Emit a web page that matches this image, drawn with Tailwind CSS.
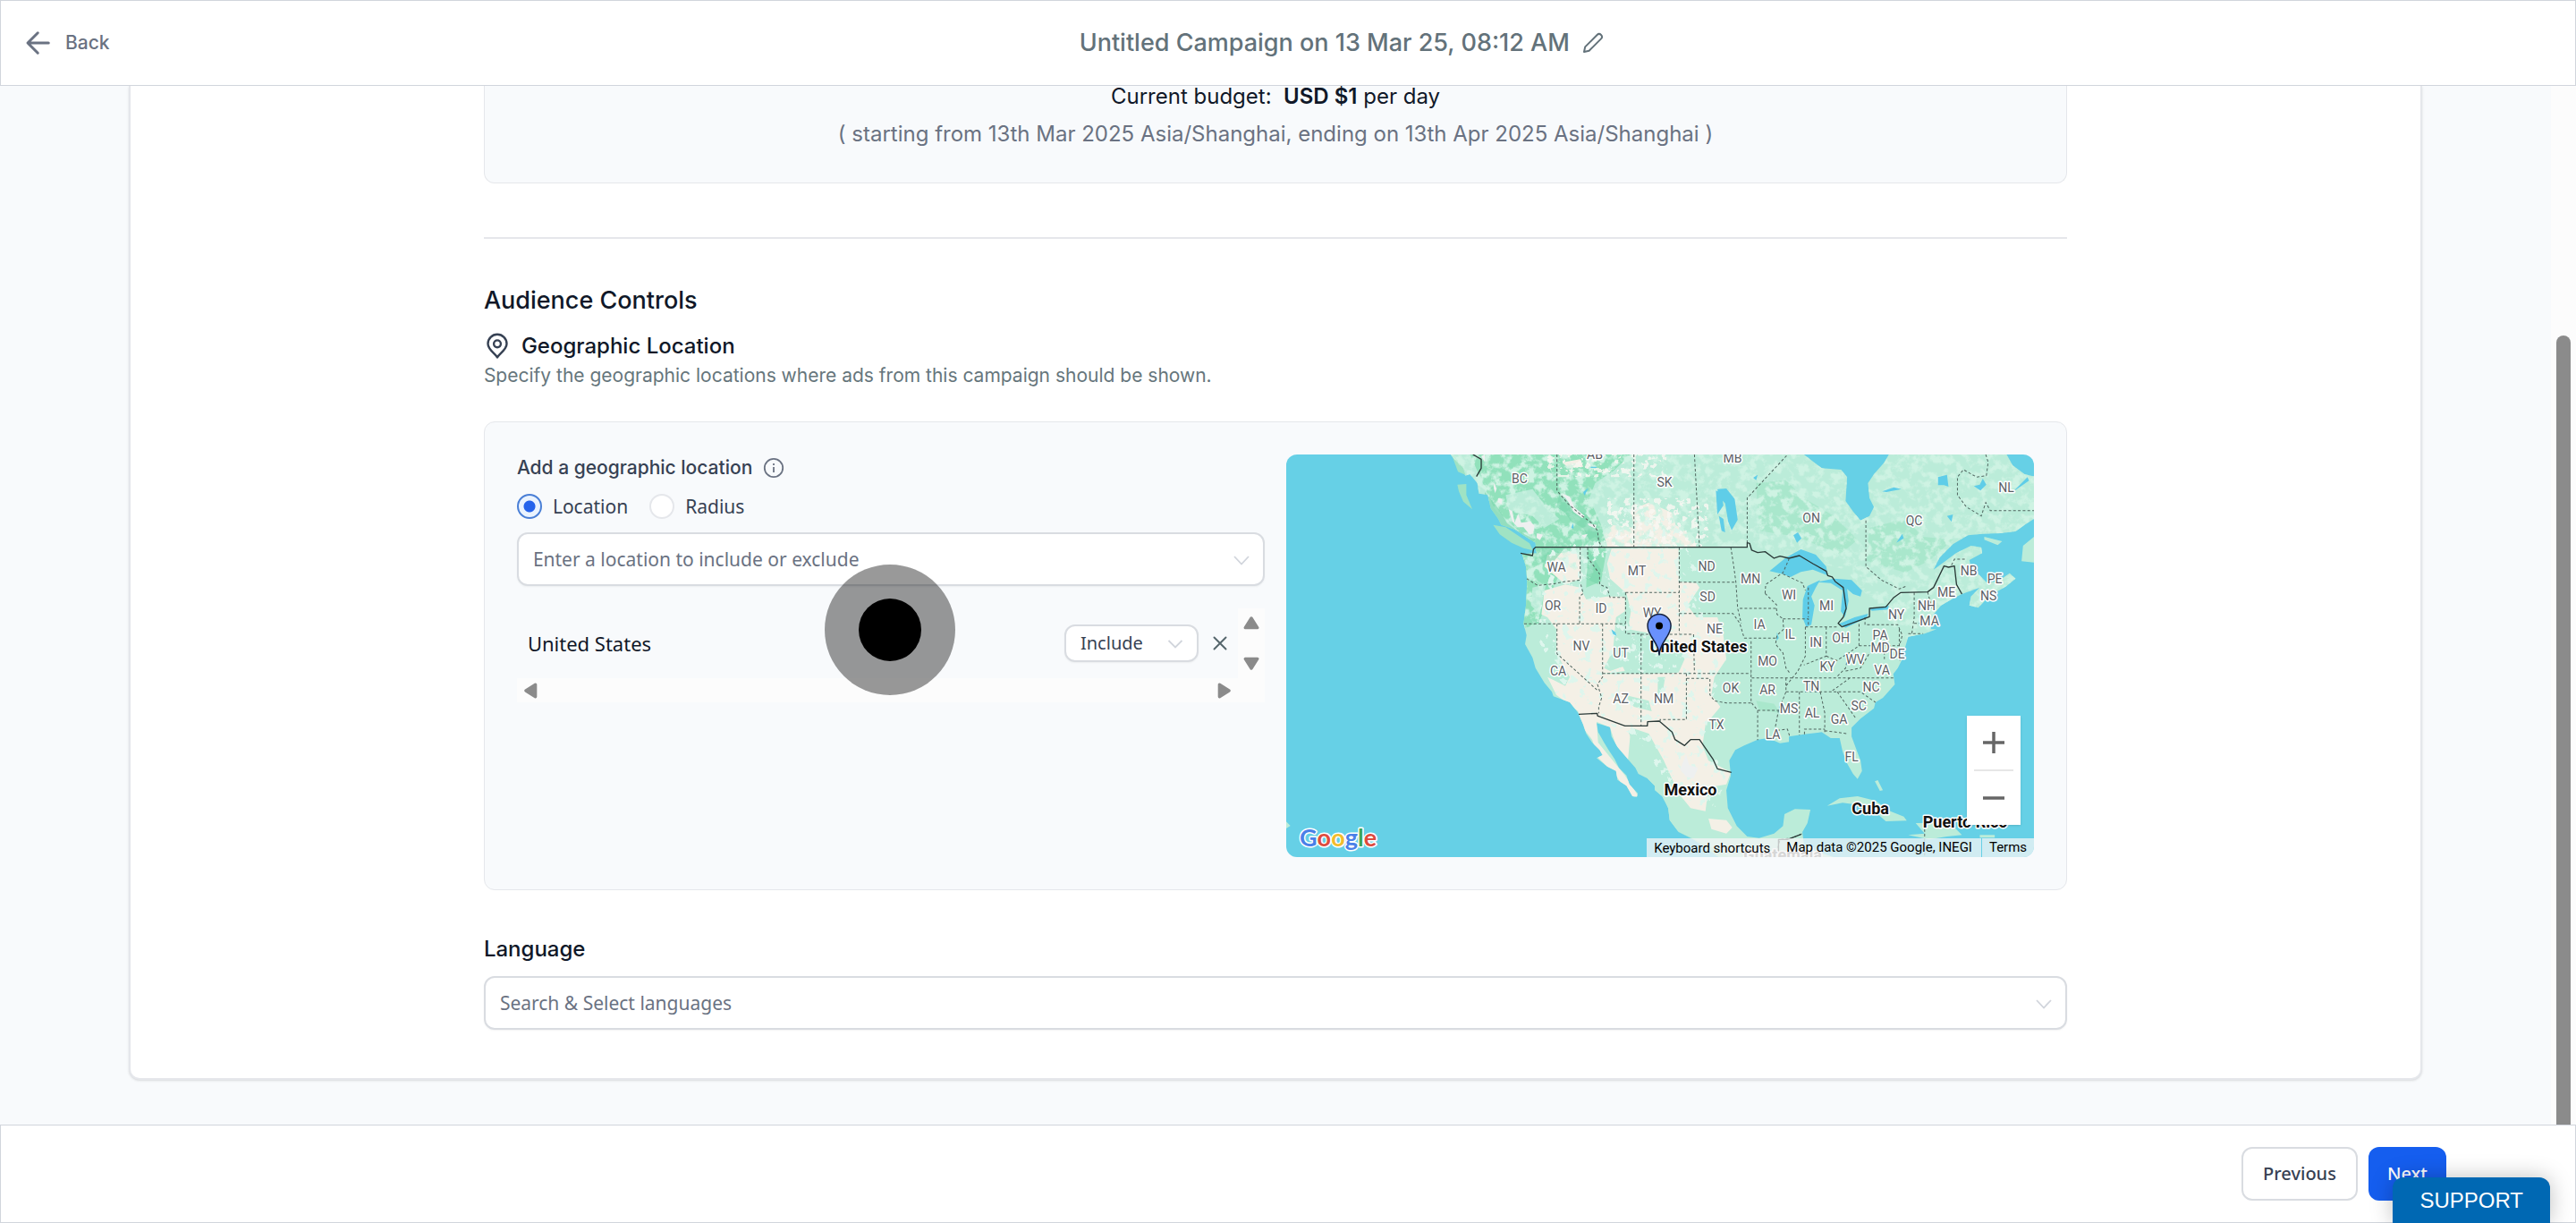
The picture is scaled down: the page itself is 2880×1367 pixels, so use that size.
<!DOCTYPE html>
<html lang="en">
<head>
    <meta charset="UTF-8">
    <meta name="viewport" content="width=device-width, initial-scale=1.0">
    <title>Untitled Campaign</title>
    <script src="https://cdn.jsdelivr.net/npm/@tailwindcss/browser@4"></script>
</head>
<body class="flex h-screen flex-col overflow-hidden bg-[#f8fafc] font-['Inter',sans-serif] text-gray-900">

    <!-- Top bar -->
    <header class="flex h-24 shrink-0 items-center border border-gray-300 bg-white pl-6">
        <button type="button" class="flex items-center gap-3 text-[21px] font-medium text-gray-500">
            <svg class="size-9" viewBox="0 0 24 24" fill="none" stroke="currentColor" stroke-width="2" stroke-linecap="round" stroke-linejoin="round"><path d="M19.500 12H4.500M11.500 4.500L4 12l7.500 7.500"/></svg>
            Back
        </button>
        <div class="flex flex-1 items-center justify-center gap-3">
            <h1 class="text-[27px] font-medium text-[#63727a]">Untitled Campaign on 13 Mar 25, 08:12 AM</h1>
            <button type="button" aria-label="Rename campaign" class="text-[#63727a]">
                <svg class="size-7" viewBox="0 0 28 28" fill="none" stroke="currentColor" stroke-width="2" stroke-linejoin="round"><path d="M4 24l1.200-5.600L18.600 5a3.100 3.100 0 0 1 4.400 4.400L9.600 22.800z"/></svg>
            </button>
        </div>
    </header>

    <div class="flex min-h-0 flex-1">
        <main class="flex-1 overflow-hidden px-36">
            <div class="rounded-b-xl border-x-2 border-b-2 border-gray-200 bg-white pb-[54px] shadow-sm">
                <div class="mx-auto w-[69.15%]">

                    <!-- Budget summary -->
                    <section class="rounded-b-xl border-x border-b border-gray-200 bg-[#f8fafc] pb-10 text-center text-2xl">
                        <p class="leading-6">Current budget:&nbsp; <strong class="font-semibold">USD $1</strong> per day</p>
                        <p class="mt-4 leading-7 text-gray-500">( starting from 13th Mar 2025 Asia/Shanghai, ending on 13th Apr 2025 Asia/Shanghai )</p>
                    </section>

                    <hr class="mt-15 border-t-2 border-gray-200">

                    <!-- Audience -->
                    <h2 class="mt-[51px] text-[27px] leading-9 font-medium">Audience Controls</h2>
                    <div class="mt-[15px] flex items-center gap-3">
                        <svg class="size-[30px] text-gray-700" viewBox="0 0 30 30" fill="none" stroke="currentColor" stroke-width="2.400" stroke-linejoin="round"><path d="M15 27.500C13 23.500 4.500 19 4.500 12.300a10.500 10.500 0 0 1 21 0C25.500 19 17 23.500 15 27.500z"/><circle cx="15" cy="12.300" r="3.900"/></svg>
                        <h3 class="text-2xl leading-9 font-medium">Geographic Location</h3>
                    </div>
                    <p class="text-[21px] leading-[30px] text-[#66767c]">Specify the geographic locations where ads from this campaign should be shown.</p>

                    <section class="mt-9 grid grid-cols-2 gap-6 rounded-xl border border-gray-200 bg-[#f8fafc] p-9">
                        <div>
                            <div class="flex items-center gap-3 text-[21px] leading-[30px] font-medium text-gray-700">
                                <label for="location">Add a geographic location</label>
                                <svg class="size-6 text-gray-500" viewBox="0 0 24 24" fill="none" stroke="currentColor" stroke-width="1.800"><circle cx="12" cy="12" r="10.200"/><path d="M12 11v6M12 7v2"/></svg>
                            </div>
                            <div class="mt-3 flex items-center gap-6 font-['Noto_Sans',sans-serif] text-[21px] leading-8 text-gray-700">
                                <label class="flex items-center gap-3">
                                    <input type="radio" name="mode" checked class="size-7 appearance-none rounded-full border-2 border-[#4a7fd6] bg-[radial-gradient(circle,#2563eb_6px,#eaf3ff_7px)]">
                                    Location
                                </label>
                                <label class="flex items-center gap-3">
                                    <input type="radio" name="mode" class="size-7 appearance-none rounded-full border-2 border-gray-200 bg-white">
                                    Radius
                                </label>
                            </div>
                            <div class="relative mt-[13px] font-['Noto_Sans',sans-serif]">
                                <input id="location" type="text" placeholder="Enter a location to include or exclude" class="block h-15 w-full rounded-xl border-2 border-[#d9dce1] bg-white px-4 text-[21px] shadow-xs placeholder:text-gray-500">
                                <svg class="absolute top-[22px] right-4 size-5 text-gray-300" viewBox="0 0 20 20" fill="none" stroke="currentColor" stroke-width="1.800"><path d="M2 5l8 8.500L18 5"/></svg>

                                <!-- Click marker -->
                                <span class="absolute top-9 left-1/2 -ml-[74px] flex size-[146px] items-center justify-center rounded-full bg-black/40">
                                    <span class="size-[70px] rounded-full bg-black"></span>
                                </span>
                            </div>

                            <!-- Chosen locations, with its scrollbars -->
                            <div class="mt-[25px] grid grid-cols-[1fr_30px] font-['Noto_Sans',sans-serif]">
                                <div class="flex h-[78px] items-center gap-4 pr-3 pl-3">
                                    <span class="flex-1 text-[22px]">United States</span>
                                    <span class="relative">
                                        <select aria-label="Include or exclude" class="block h-[42px] w-[150px] appearance-none rounded-xl border-2 border-[#d9dce1] bg-white pl-4 text-[20px] text-gray-700 shadow-xs">
                                            <option>Include</option>
                                            <option>Exclude</option>
                                        </select>
                                        <svg class="pointer-events-none absolute top-3 right-4 size-5 text-gray-300" viewBox="0 0 20 20" fill="none" stroke="currentColor" stroke-width="1.800"><path d="M2.500 6l7.500 7.500L17.500 6"/></svg>
                                    </span>
                                    <button type="button" aria-label="Remove United States" class="text-[#56666c]">
                                        <svg class="size-4" viewBox="0 0 16 16" fill="none" stroke="currentColor" stroke-width="2" stroke-linecap="round"><path d="M1.500 1.500l13 13M14.500 1.500l-13 13"/></svg>
                                    </button>
                                </div>
                                <div class="flex flex-col items-center justify-between bg-[#fcfcfc] py-[7px] text-[#8b8b8b]">
                                    <svg class="size-[18px]" viewBox="0 0 16 16" fill="currentColor" stroke="currentColor" stroke-width="3" stroke-linejoin="round"><path d="M8 3.500L14 13H2z"/></svg>
                                    <svg class="size-[18px]" viewBox="0 0 16 16" fill="currentColor" stroke="currentColor" stroke-width="3" stroke-linejoin="round"><path d="M8 12.500L14 3H2z"/></svg>
                                </div>
                                <div class="flex h-[27px] items-center justify-between bg-[#fcfcfc] px-1.5 text-[#8b8b8b]">
                                    <svg class="size-[18px]" viewBox="0 0 16 16" fill="currentColor" stroke="currentColor" stroke-width="3" stroke-linejoin="round"><path d="M3.500 8L13 2v12z"/></svg>
                                    <svg class="size-[18px]" viewBox="0 0 16 16" fill="currentColor" stroke="currentColor" stroke-width="3" stroke-linejoin="round"><path d="M12.500 8L3 2v12z"/></svg>
                                </div>
                                <div class="bg-[#fcfcfc]"></div>
                            </div>
                        </div>

                        <!-- Map -->
                        <div class="relative h-[450px] overflow-hidden rounded-xl bg-[#66d0e6] font-['Roboto',sans-serif]">
                            <svg class="block size-full" viewBox="0 0 836 450" preserveAspectRatio="xMidYMid slice" role="img" aria-label="Map of the United States">
                                <defs>
                                    <filter id="forest" x="0" y="0" width="100%" height="100%">
                                        <feTurbulence type="fractalNoise" baseFrequency="0.035" numOctaves="4" seed="7"/>
                                        <feColorMatrix values="0 0 0 0 .62  0 0 0 0 .894  0 0 0 0 .77  5 0 0 0 -2.300"/>
                                    </filter>
                                    <filter id="scrub" x="0" y="0" width="100%" height="100%">
                                        <feTurbulence type="fractalNoise" baseFrequency="0.04" numOctaves="4" seed="3"/>
                                        <feColorMatrix values="0 0 0 0 .73  0 0 0 0 .925  0 0 0 0 .85  14 0 0 0 -8.400"/>
                                    </filter>
                                    <filter id="plain" x="0" y="0" width="100%" height="100%">
                                        <feTurbulence type="fractalNoise" baseFrequency="0.05" numOctaves="3" seed="11"/>
                                        <feColorMatrix values="0 0 0 0 .955  0 0 0 0 .94  0 0 0 0 .9  16 0 0 0 -9"/>
                                    </filter>
                                    <path id="west" d="M575 54L600 85 625 125 640 120 665 150 670 185 700 190 710 235 735 270 745 290 790 305 820 325 860 350 862 385 815 388 828 430 832 480 828 560 820 620 830 660 825 690 850 735 860 770 890 820 915 850 920 865 975 885 1003 920 1020 960 1030 990 1050 1020 1075 1045 1085 1062 1065 1072 1100 1100 1130 1115 1135 1145 1165 1165 1185 1200 1200 1202 1203 1190 1175 1160 1165 1130 1140 1105 1125 1075 1105 1045 1090 1020 1070 985 1065 955 1110 968 1115 1000 1135 1035 1165 1070 1195 1105 1205 1125 1235 1140 1255 1160 1280 1185 1305 1240 1310 1280 1340 1320V54z"/>
                                    <path id="east" d="M0 54H500L560 100 625 105 645 130 640 210 665 245 690 275 720 260 735 230 720 200 715 150 735 120 770 80 785 54H1180L1200 90 1240 120 1272 128V270L1240 290 1210 312 1160 318 1100 320 1050 325 1000 355 955 400 935 440 970 415 1010 385 1060 360 1095 365 1098 385 1055 408 1060 430 1100 470 1112 482 1150 480 1190 452 1210 470 1180 495 1120 530 1085 568 1055 560 1060 530 1090 500 1030 522 1000 537 960 560 935 590 925 640 945 640 905 655 850 665 840 700 828 715 830 740 815 770 800 790 805 825 765 870 740 885 735 905 690 940 660 970 660 1000 675 1040 690 1080 695 1115 680 1142 665 1125 645 1090 630 1050 620 1005 590 1005 560 985 500 992 450 1000 450 1018 420 1022 380 1005 345 1010 300 1030 270 1045 250 1080 255 1130 240 1180 245 1240 275 1300 310 1335 350 1340 400 1325 430 1300 435 1260 470 1243 522 1245 512 1290 495 1320 500 1360 540 1385 600 1404H215L130 1345 80 1320 50 1280 45 1240 25 1200 0 1180z"/>
                                    <clipPath id="landClip">
                                        <use href="#west"/>
                                        <use href="#east" x="1260"/>
                                    </clipPath>
                                    <clipPath id="forestClip"><path d="M560 54H2560V680H2100L1900 440 1600 365 H1130L1060 400 1050 480 900 380 870 620 820 640 780 300z"/></clipPath>
                                    <clipPath id="dryClip"><path d="M900 365L1100 340 1090 290 1190 210 1260 240 1340 300 1400 360V480L1420 560 1490 640 1500 760 1440 900 1430 1040 1510 1120 1460 1250 1320 1190 1200 1000 1010 920 930 860 860 640 890 480z"/></clipPath>
                                    <clipPath id="prairieClip"><path d="M1100 200H1440V365H1100z M900 54H1300V130H900z"/></clipPath>
                                </defs>
                                <g transform="scale(.33333) translate(-24 -54)">
                                    <g fill="#bbecd9">
                                        <use href="#west"/>
                                        <use href="#east" x="1260"/>
                                        <path fill="#9fe3c4" d="M718 290L760 298 800 325 840 352 852 376 820 368 780 350 740 322zM598 155L628 153 628 190 648 238 618 212 603 178zM580 58L610 78 625 122 600 112z"/>
                                        <path d="M1838 1232L1880 1207 1940 1200 2000 1215 2050 1250 2095 1268 2105 1282 2035 1284 2010 1262 1950 1230 1890 1222zM2110 1330L2165 1325 2135 1290 2190 1290 2260 1300 2290 1330 2240 1335 2180 1345zM2350 1330h50v9h-50zM2495 360L2532 330V416L2490 412zM2365 330L2425 345 2410 358 2365 340zM1998 1150L2008 1146 2025 1180 2015 1182zM24 1285l14 14-14 9z"/>
                                    </g>
                                    <g clip-path="url(#landClip)">
                                        <!-- mountains and dry plains -->
                                        <path fill="#91e1bb" d="M640 54H1180L1120 110 1060 150 1040 200 1080 290 1100 365 1080 480 1030 500 1035 365H980L920 500 870 620 815 640 810 380 860 365 720 230z"/>
                                        <path fill="#bbecd9" d="M760 190L850 170 900 235 940 270 890 300 850 260 770 240zM850 500l45-10-20 100-30-30z"/>
                                        <path fill="#f4f0e6" d="M900 390L1010 375 1012 470 960 490 1010 500 1030 540 1100 530 1160 530V600L1130 640V720L1160 780 1080 790 1250 790 1320 760 1280 660 1170 640 1180 580 1165 520 1110 470 1100 420 1115 370H1340V480L1400 485 1410 500 1370 560 1400 600 1470 600 1490 660 1500 740 1460 800 1450 860 1480 900 1430 960 1420 1030 1440 1080 1515 1120 1500 1160 1440 1170 1430 1250 1380 1240 1340 1190 1290 1080 1240 990 1180 970 1170 1080 1200 1120 1130 1030 1110 970 1065 950 1070 1020 1160 1130 1205 1200 1180 1205 1130 1130 1070 1070 1050 1010 1010 960 1003 915 930 860 900 800 960 830 975 800 930 720 930 640 900 600 880 590 890 510 960 490 890 430z"/>
                                        <path fill="#f4f0e6" d="M1090 320L1120 290 1190 300 1180 240 1240 215 1320 250 1330 290 1390 330 1400 365H1100zM950 80l60-10 10 25-50 5zM1440 1275l60 5 20 25-20 20-50-15z"/>
                                        <path fill="#bbecd9" d="M1170 980l60 10 30 80 40 60 20 120-80-100zM1130 600l30-20 20 60-30 60 20 60-60 20-20-10 30-60zM1160 860l80 20 10 35-60-15zM1220 750l60-80 60 10 20 60-20 45-100 5zM1270 800l25 0-10 60-15 30z"/>
                                        <g fill="#9ce4c3" opacity=".6">
                                            <path d="M1600 150l100-10 60 60 100 60 80 80-60 50-140-60-130-20zM1980 300l120-30 60 60 100 10-80 70-80 40-130-40zM1600 880l60 10 20 30-70-10zM1300 1290l40 30 130 60 40 24h-70l-120-60z"/>
                                        </g>
                                        <g clip-path="url(#forestClip)"><rect x="540" y="54" width="2000" height="700" filter="url(#forest)"/></g>
                                        <g fill="#78d6ac" opacity=".6">
                                            <path d="M940 190L970 205 1000 240 1030 255 1060 290 1080 350 1060 330 1040 340 1020 300 980 280 960 250 930 230zM690 180l50 60 25 45 35 25 60 30-30 20-30-25-50-35-30-45-30-15zM1040 380l40 60-10 50-40-20zM880 365h80l-20 25-30 35-30-10z"/>
                                        </g>
                                        <g clip-path="url(#dryClip)"><rect x="800" y="200" width="760" height="1080" filter="url(#scrub)"/></g>
                                        <g clip-path="url(#prairieClip)" opacity=".8"><rect x="860" y="54" width="600" height="320" filter="url(#plain)"/></g>
                                        <!-- snow -->
                                        <path fill="#eef0f0" d="M770 238l12 5 8 40 12-30 10 30 30-5 15 15-5 25-12 5-20-25-20 0-18-20zM865 318l20 5-10 18-12-8zM735 200l14 3-3 18-14-8zM720 148l10 20-5 15-5-15zM950 185l25 10 15 35 35 30-8 8-30-22-15-30zM1035 285l30 5-5 12-22-10zM1015 325l20-5-10 15zM690 54v25l-12-20zM1345 1110l20-50 10 35 30 10-15 35-25-5z"/>
                                        <!-- lakes -->
                                        <g fill="#5fcde8">
                                            <path d="M1465 175l20 10 5 40-20 30zM1470 170l30-2 28 35 10 70-20 35-12-30-10-60-22-25zM1475 260l15 10 6 45-12-5zM1725 325l15-10 12 20-15 15zM1590 132l15-10-5 18zM2022 178l40-14 25 6-50 10zM2210 130l30-8 5 40-15-5-20 0zM2240 260l20-5-5 25zM2330 160l20-5 10-20 12 20-20 20zM2070 350l20-30 5 15zM2460 180l50-50 5 12z"/>
                                            <path d="M1645 445L1700 400 1750 372 1800 390 1835 430 1840 460 1790 440 1750 448 1715 465 1690 455z"/>
                                            <path d="M1815 475L1772 495 1757 540 1755 600 1768 632 1785 625 1796 560 1785 530 1800 500z"/>
                                            <path d="M1805 482L1860 470 1920 475 1955 510 1950 530 1925 522 1905 505 1910 545 1898 600 1884 580 1890 510 1850 485z"/>
                                            <path d="M1878 622L1930 600 1975 588 1970 602 1900 635zM1980 572L2045 560 2042 574 1988 578zM1670 650l6 20-8 8zM1114 640l14 10 4 12-12-6zM800 325l50 30 15 30-12 0-8-22-40-20z"/>
                                            <path d="M1020 180l18-14-14 26zM1045 95h20v4h-20zM980 300l6-16 2 18z"/>
                                        </g>
                                    </g>
                                    <!-- state lines -->
                                    <g fill="none" stroke="#50655f" stroke-width="3" stroke-dasharray="9 7">
                                        <path d="M932 54V175L970 220 1010 255 1050 285 1068 310 1072 345 1083 365M1190 54V365M1010 365V475L960 480 920 488 867 493 830 470M1035 365V400L1075 455V490L1100 500 1110 533 1160 533M1012 490L1020 520 1008 530V622M822 622H1162M1162 517V655H1214M1162 517H1342M932 622V722L1068 845M1085 622V800L1068 825 1082 870 1072 900V922M1085 788H1583M1214 655V964M1214 657H1390L1393 788M1366 788V943H1278V950"/>
                                        <g transform="translate(1260)">
                                            <path d="M133 54L150 365M442 58L310 200V352M82 365V655M82 482H272M82 587H262L285 620 300 670M255 365L265 430 272 482 278 570 290 620M285 570H408M300 670H405M408 570L410 590 430 605 432 640 410 660 405 690 430 720 440 770 455 790M370 520L372 490 430 450 450 405M370 520L410 560M430 455L495 485 505 510M430 605H515V630M505 632H615M505 632V730L480 780 440 830M575 632V730L500 760M575 730L610 745 650 720 685 695V615M685 695H820M705 600V625H815L830 660 822 690M820 640V700L822 745M770 700V740M650 720L640 770 610 800M640 780L690 770 720 720M455 803H805M325 803H455M323 680V885L345 912 345 1012M107 805H185V860L200 880 240 887H330M345 912H415M440 803V850L415 912 402 980 445 975 452 998M440 850H690L740 885M485 850V995M555 850L570 920V985M502 992V975H570M570 980L645 990M655 803L590 850M612 850L675 940M708 275V430L760 475 820 505 845 495M870 517V600L862 655M915 515L930 570M870 620H920M850 655H900M995 425L1005 405H1040M1110 54L1118 80 1112 125 1080 130 1035 105 1015 130V190L1045 230 1095 260 1110 215 1125 242H1272M515 500V600M405 1404L420 1345 460 1340 495 1325M905 1310V1404"/>
                                        </g>
                                    </g>
                                    <!-- country borders -->
                                    <g fill="none" stroke="#2b3a38" stroke-width="4" stroke-linejoin="round">
                                        <path d="M650 54L678 70V100L662 128M810 385L850 393 853 372 860 365H1570V350L1578 352 1585 375 1605 383 1630 380 1660 402 1680 395 1710 402 1745 393 1790 420 1835 445 1840 460 1855 465 1865 480 1892 500 1902 570 1892 600 1875 620 1888 632 1980 598V570L2035 565 2060 535 2085 517 2175 515 2195 500 2230 428 2245 432 2265 428 2272 490 2290 522"/>
                                        <path d="M1005 925L1067 922 1068 930 1160 964H1235L1236 950 1275 948 1318 985 1328 1010 1360 1030 1380 1010H1410L1455 1075 1470 1108 1517 1120M1675 1404V1345H1705L1750 1328"/>
                                    </g>
                                </g>
                                <g fill="#5b5f66" stroke="#fff" stroke-width="3" stroke-linejoin="round" paint-order="stroke" font-size="14" text-anchor="middle">
                                    <text x="345" y="5">AB</text><text x="261" y="32">BC</text><text x="423" y="36">SK</text><text x="499" y="9">MB</text>
                                    <text x="587" y="76">ON</text><text x="702" y="79">QC</text><text x="805" y="42">NL</text>
                                    <text x="302" y="131">WA</text><text x="392" y="135">MT</text><text x="298" y="174">OR</text><text x="352" y="177">ID</text>
                                    <text x="409" y="182">WY</text><text x="330" y="219">NV</text><text x="374" y="227">UT</text><text x="304" y="247">CA</text>
                                    <text x="374" y="278">AZ</text><text x="422" y="278">NM</text><text x="470" y="130">ND</text><text x="519" y="144">MN</text>
                                    <text x="471" y="164">SD</text><text x="562" y="162">WI</text><text x="604" y="174">MI</text><text x="479" y="200">NE</text>
                                    <text x="529" y="195">IA</text><text x="563" y="206">IL</text><text x="592" y="215">IN</text><text x="620" y="210">OH</text>
                                    <text x="682" y="184">NY</text><text x="716" y="174">NH</text><text x="719" y="191">MA</text><text x="738" y="159">ME</text>
                                    <text x="763" y="135">NB</text><text x="792" y="144">PE</text><text x="785" y="163">NS</text><text x="664" y="207">PA</text>
                                    <text x="664" y="221">MD</text><text x="683" y="228">DE</text><text x="636" y="234">WV</text><text x="666" y="246">VA</text>
                                    <text x="605" y="242">KY</text><text x="538" y="236">MO</text><text x="587" y="264">TN</text><text x="654" y="265">NC</text>
                                    <text x="497" y="266">OK</text><text x="538" y="268">AR</text><text x="562" y="289">MS</text><text x="588" y="294">AL</text>
                                    <text x="640" y="286">SC</text><text x="618" y="301">GA</text><text x="481" y="307">TX</text><text x="544" y="318">LA</text>
                                    <text x="632" y="343">FL</text>
                                </g>
                                <g fill="#111" stroke="#fff" stroke-width="3" stroke-linejoin="round" paint-order="stroke" font-size="18" font-weight="700" text-anchor="middle">
                                    <text x="461" y="221">United States</text>
                                    <text x="452" y="381">Mexico</text>
                                    <text x="653" y="402">Cuba</text>
                                    <text x="759" y="417">Puerto Rico</text>
                                    <text x="555" y="454" fill="#777">Guatemala</text>
                                </g>
                                <path fill="#6991fd" stroke="#14213f" stroke-width="1.500" d="M417 224.500C416.500 209 404 204 404 191.500a13 13 0 0 1 26 0C430 204 417.500 209 417 224.500z"/>
                                <circle cx="417" cy="191.500" r="4"/>
                                <g font-family="Lato, sans-serif" font-size="27" font-weight="700" stroke="#fff" stroke-width="3" stroke-linejoin="round" paint-order="stroke">
                                    <text x="15" y="438"><tspan fill="#4a80e8">G</tspan><tspan fill="#dd4b3e">o</tspan><tspan fill="#f2bd2c">o</tspan><tspan fill="#4a80e8">g</tspan><tspan fill="#3aa757">l</tspan><tspan fill="#dd4b3e">e</tspan></text>
                                </g>
                            </svg>

                            <div class="absolute right-[15px] bottom-9 flex w-15 flex-col items-center bg-white text-[#666] shadow">
                                <button type="button" aria-label="Zoom in" class="flex h-15 w-full items-center justify-center">
                                    <svg class="size-6" viewBox="0 0 24 24" fill="none" stroke="currentColor" stroke-width="3.500"><path d="M12 0v24M0 12h24"/></svg>
                                </button>
                                <span class="h-0.5 w-11 bg-[#e6e6e6]"></span>
                                <button type="button" aria-label="Zoom out" class="flex h-15 w-full items-center justify-center">
                                    <svg class="size-6" viewBox="0 0 24 24" fill="none" stroke="currentColor" stroke-width="3.500"><path d="M0 12h24"/></svg>
                                </button>
                            </div>

                            <div class="absolute right-0 bottom-0 flex h-[21px] items-center text-[15px] leading-5 text-black">
                                <button type="button" class="h-full bg-[#f5f5f5]/75 px-2">Keyboard shortcuts</button>
                                <span class="h-full bg-[#f5f5f5]/75 px-2.5">Map data ©2025 Google, INEGI</span>
                                <a href="#" class="ml-px h-full bg-[#f5f5f5]/75 px-2">Terms</a>
                            </div>
                        </div>
                    </section>

                    <!-- Language -->
                    <label for="language" class="mt-12 block text-2xl leading-9 font-medium">Language</label>
                    <div class="relative mt-3 font-['Noto_Sans',sans-serif]">
                        <input id="language" type="text" placeholder="Search &amp; Select languages" class="block h-15 w-full rounded-xl border-2 border-[#d9dce1] bg-white px-4 text-[21px] shadow-xs placeholder:text-gray-500">
                        <svg class="absolute top-[22px] right-4 size-5 text-gray-300" viewBox="0 0 20 20" fill="none" stroke="currentColor" stroke-width="1.800"><path d="M2 5l8 8.500L18 5"/></svg>
                    </div>
                </div>
            </div>
        </main>

        <!-- Page scrollbar -->
        <div class="flex w-7 justify-center bg-[#fcfcfc] pt-[279px]">
            <div class="w-4 rounded-t-full bg-[#8b8b8b]"></div>
        </div>
    </div>

    <footer class="relative flex h-[110px] shrink-0 items-center justify-end gap-3 border border-gray-300 bg-white px-36 font-['Noto_Sans',sans-serif] text-[20px] font-medium">
        <button type="button" class="h-15 rounded-xl border-2 border-[#d9dce1] bg-white px-[22px] text-gray-700">Previous</button>
        <button type="button" class="h-15 rounded-xl bg-[#155eef] px-[21px] text-white">Next</button>
        <button type="button" class="absolute right-7 -bottom-px h-[51px] rounded-t-xl bg-[#0068b3] px-[30px] font-['Liberation_Sans',sans-serif] text-2xl font-normal text-white shadow-[0_0_24px_rgba(0,0,0,0.25)]">SUPPORT</button>
    </footer>

</body>
</html>
